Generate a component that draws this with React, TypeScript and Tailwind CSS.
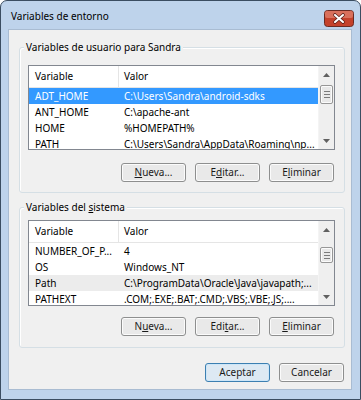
import React from "react";

type Row = { name: string; value: string };

const userVars: Row[] = [
  { name: "ADT_HOME", value: "C:\\Users\\Sandra\\android-sdks" },
  { name: "ANT_HOME", value: "C:\\apache-ant" },
  { name: "HOME", value: "%HOMEPATH%" },
  { name: "PATH", value: "C:\\Users\\Sandra\\AppData\\Roaming\\np..." },
];

const systemVars: Row[] = [
  { name: "NUMBER_OF_P...", value: "4" },
  { name: "OS", value: "Windows_NT" },
  { name: "Path", value: "C:\\ProgramData\\Oracle\\Java\\javapath;..." },
  { name: "PATHEXT", value: ".COM;.EXE;.BAT;.CMD;.VBS;.VBE;.JS;...." },
];

function Arrow({ up }: { up?: boolean }) {
  return (
    <div className="h-[17px] flex items-center justify-center">
      <svg width="7" height="4" viewBox="0 0 7 4">
        {up ? (
          <path d="M0 4 L3.5 0 L7 4 Z" fill="#606060" />
        ) : (
          <path d="M0 0 L3.5 4 L7 0 Z" fill="#606060" />
        )}
      </svg>
    </div>
  );
}

function Scrollbar({ thumbClass }: { thumbClass: string }) {
  return (
    <div className="w-[16px] flex flex-col bg-[#efefef] border-l border-[#f4f4f4]">
      <Arrow up />
      <div className={thumbClass + " mx-[1px] rounded-[2px] border border-[#979797] bg-[#e8e8e8] shadow-[inset_0_0_0_1px_#fbfbfb] flex flex-col items-center justify-center gap-[2px]"}>
        <div className="w-[6px] h-[1px] bg-[#7a7a7a]" />
        <div className="w-[6px] h-[1px] bg-[#7a7a7a]" />
        <div className="w-[6px] h-[1px] bg-[#7a7a7a]" />
      </div>
      <div className="flex-1" />
      <Arrow />
    </div>
  );
}

function ListView({
  rows,
  selected,
  highlighted,
  heightClass,
  thumbClass,
}: {
  rows: Row[];
  selected?: number;
  highlighted?: number;
  heightClass: string;
  thumbClass: string;
}) {
  return (
    <div className={heightClass + " border border-[#828790] bg-white flex overflow-hidden"}>
      <div className="flex-1 flex flex-col overflow-hidden">
        <div className="h-[22px] shrink-0 flex border-b border-[#e5e5e5]">
          <div className="w-[90px] pl-[6px] flex items-center border-r border-[#e5e5e5]">Variable</div>
          <div className="flex-1 pl-[5px] flex items-center">Valor</div>
        </div>
        {rows.map((r, i) => (
          <div
            key={r.name}
            className={
              "h-[16px] shrink-0 flex items-center whitespace-nowrap " +
              (i === selected ? "bg-[#3399ff] text-white" : i === highlighted ? "bg-[#ececec]" : "")
            }
          >
            <div className="w-[90px] pl-[6px] overflow-hidden">{r.name}</div>
            <div className="flex-1 pl-[5px] overflow-hidden">{r.value}</div>
          </div>
        ))}
      </div>
      <Scrollbar thumbClass={thumbClass} />
    </div>
  );
}

function Button({
  children,
  primary,
}: {
  children: React.ReactNode;
  primary?: boolean;
}) {
  return (
    <button
      className={
        "w-[65px] h-[19px] rounded-[3px] border flex items-center justify-center text-[#1a1a1a] " +
        (primary
          ? "border-[#3c7fb1] bg-[#dde9f3] shadow-[inset_0_0_0_1px_#cde6f8]"
          : "border-[#8e8f8f] bg-[#e9e9e9] shadow-[inset_0_0_0_1px_#fbfbfb]")
      }
    >
      {children}
    </button>
  );
}

function Group({
  title,
  children,
  className,
}: {
  title: React.ReactNode;
  children: React.ReactNode;
  className: string;
}) {
  return (
    <div className={className + " relative ml-[10px] w-[326px] rounded-[3px] border border-[#d5dfe5] shadow-[inset_1px_1px_0_#fff]"}>
      <span className="absolute left-[4px] top-[-8px] bg-[#f0f0f0] px-[2px] leading-[14px]">{title}</span>
      {children}
    </div>
  );
}

function U({ children }: { children: React.ReactNode }) {
  return <span className="underline underline-offset-[1px]">{children}</span>;
}

// window close button, drawn like the Aero one
function CloseButton() {
  return (
    <svg className="mt-[6px]" width="30" height="17" viewBox="0 0 30 17">
      <rect x="0.5" y="0.5" width="29" height="16" rx="3" fill="#c4412b" stroke="#6a2a22" />
      <rect x="1" y="1" width="28" height="7" rx="2" fill="#d9705c" />
      <path d="M11 5 L19 12 M19 5 L11 12" stroke="#5a1f18" strokeWidth="3.6" strokeLinecap="round" />
      <path d="M11 5 L19 12 M19 5 L11 12" stroke="#ffffff" strokeWidth="2.1" strokeLinecap="round" />
    </svg>
  );
}

export default function App() {
  return (
    <div className="w-[361px] h-[400px] font-['Noto_Sans',sans-serif] text-[10px] text-black">
      <div className="w-full h-full border border-[#3b4d61] rounded-t-[7px] bg-[#bed3eb] flex flex-col">
        <div className="h-[28px] shrink-0 flex items-center justify-between pl-[10px] pr-[6px]">
          <span className="text-[10px] pt-[2px]">Variables de entorno</span>
          <CloseButton />
        </div>
        <div className="mx-[7px] w-[344px] h-[361px] bg-[#f0f0f0] border border-[#a9bcd2] flex flex-col">
          <Group title="Variables de usuario para Sandra" className="mt-[17px] h-[146px] pt-[17px] pl-[8px] pr-[9px]">
            <ListView rows={userVars} selected={0} heightClass="h-[85px]" thumbClass="mt-[2px] h-[19px]" />
            <div className="mt-[13px] flex justify-end gap-[9px] pr-[1px]">
              <Button><U>N</U>ueva...</Button>
              <Button>E<U>d</U>itar...</Button>
              <Button>E<U>l</U>iminar</Button>
            </div>
          </Group>
          <Group
            title={<>Variables del <U>s</U>istema</>}
            className="mt-[14px] h-[141px] pt-[12px] pl-[8px] pr-[9px]"
          >
            <ListView rows={systemVars} highlighted={2} heightClass="h-[86px]" thumbClass="mt-[9px] h-[16px]" />
            <div className="mt-[11px] flex justify-end gap-[9px] pr-[1px]">
              <Button>N<U>u</U>eva...</Button>
              <Button>Edi<U>t</U>ar...</Button>
              <Button><U>E</U>liminar</Button>
            </div>
          </Group>
          <div className="mt-[15px] flex justify-end gap-[9px] pr-[7px]">
            <Button primary>Aceptar</Button>
            <Button>Cancelar</Button>
          </div>
        </div>
      </div>
    </div>
  );
}
